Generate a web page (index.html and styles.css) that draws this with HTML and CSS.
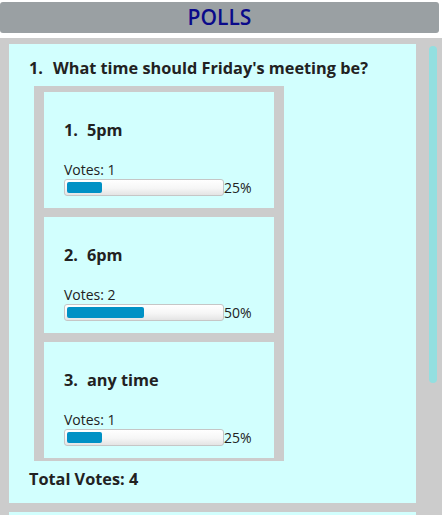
FILE: index.html
```html
<!DOCTYPE html>
<html lang="en">
<head>
<meta charset="utf-8">
<title>Polls</title>
<link rel="stylesheet" href="styles.css">
</head>
<body>
<header class="topbar">POLLS</header>
<main class="panel">
  <div class="cards">
    <section class="card">
      <h2 class="question"><span class="num">1.</span>What time should Friday's meeting be?</h2>
      <ol class="options">
        <li class="option">
          <h3 class="opt-title"><span class="num">1.</span>5pm</h3>
          <div class="votes">Votes: 1</div>
          <div class="bar-row">
            <div class="bar"><div class="fill" style="width:23%"></div></div>
            <span class="pct">25%</span>
          </div>
        </li>
        <li class="option">
          <h3 class="opt-title"><span class="num">2.</span>6pm</h3>
          <div class="votes">Votes: 2</div>
          <div class="bar-row">
            <div class="bar"><div class="fill" style="width:50%"></div></div>
            <span class="pct">50%</span>
          </div>
        </li>
        <li class="option">
          <h3 class="opt-title"><span class="num">3.</span>any time</h3>
          <div class="votes">Votes: 1</div>
          <div class="bar-row">
            <div class="bar"><div class="fill" style="width:23%"></div></div>
            <span class="pct">25%</span>
          </div>
        </li>
      </ol>
      <div class="total">Total Votes: 4</div>
    </section>
    <section class="card card-next"></section>
  </div>
  <div class="rail"><div class="thumb"></div></div>
</main>
</body>
</html>
```

FILE: styles.css
```css
html, body {
  margin: 0;
  padding: 0;
  height: 100%;
  overflow: hidden;
  background: #ffffff;
}

body {
  font-family: "Open Sans", "Noto Sans", sans-serif;
  color: #222222;
  display: flex;
  flex-direction: column;
}

.topbar {
  flex: none;
  margin: 2px 3px 5px 0;
  height: 31px;
  line-height: 31px;
  background: #9aa0a3;
  border-radius: 3px;
  text-align: center;
  font-size: 21px;
  font-weight: 600;
  color: #0a0a8a;
}

.panel {
  flex: 1;
  display: flex;
  background: #cccccc;
  padding: 6px 0 0 9px;
  overflow: hidden;
}

.cards {
  width: 407px;
  flex: none;
  display: flex;
  flex-direction: column;
  gap: 9px;
}

.card {
  flex: none;
  background: #d2fffe;
  padding: 14px 20px 14px 20px;
}

.card-next {
  height: 200px;
}

.question {
  margin: 0;
  font-size: 16.3px;
  line-height: 20px;
  font-weight: 700;
  white-space: nowrap;
}

.num {
  margin-right: 10px;
}

.options {
  list-style: none;
  display: flex;
  flex-direction: column;
  margin: 8px 0 0 5px;
  padding: 0 10px;
  width: 230px;
  background: #cccccc;
}

.option {
  background: #d2fffe;
  margin: 6px 0 3px;
  padding: 28px 20px 12px;
}

.opt-title {
  margin: 0;
  font-size: 16.3px;
  line-height: 20px;
  font-weight: 700;
}

.opt-title .num {
  margin-right: 9px;
}

.votes {
  margin-top: 21px;
  font-size: 14px;
  line-height: 18px;
}

.bar-row {
  display: flex;
  height: 17px;
}

.bar {
  box-sizing: border-box;
  width: 160px;
  height: 17px;
  border: 1px solid #c6c6c6;
  border-radius: 3px;
  background: linear-gradient(#ffffff, #f6f6f6 55%, #e4e4e4);
  padding: 2px;
}

.fill {
  height: 11px;
  background: #0091c5;
  border-radius: 2px;
}

.pct {
  font-size: 14px;
  line-height: 17px;
}

.total {
  margin-top: 8px;
  font-size: 16.3px;
  line-height: 20px;
  font-weight: 700;
}

.rail {
  margin-left: 13px;
  padding-top: 2px;
  width: 8px;
}

.thumb {
  height: 337px;
  background: #93dfe0;
  border-radius: 4px;
}
```
